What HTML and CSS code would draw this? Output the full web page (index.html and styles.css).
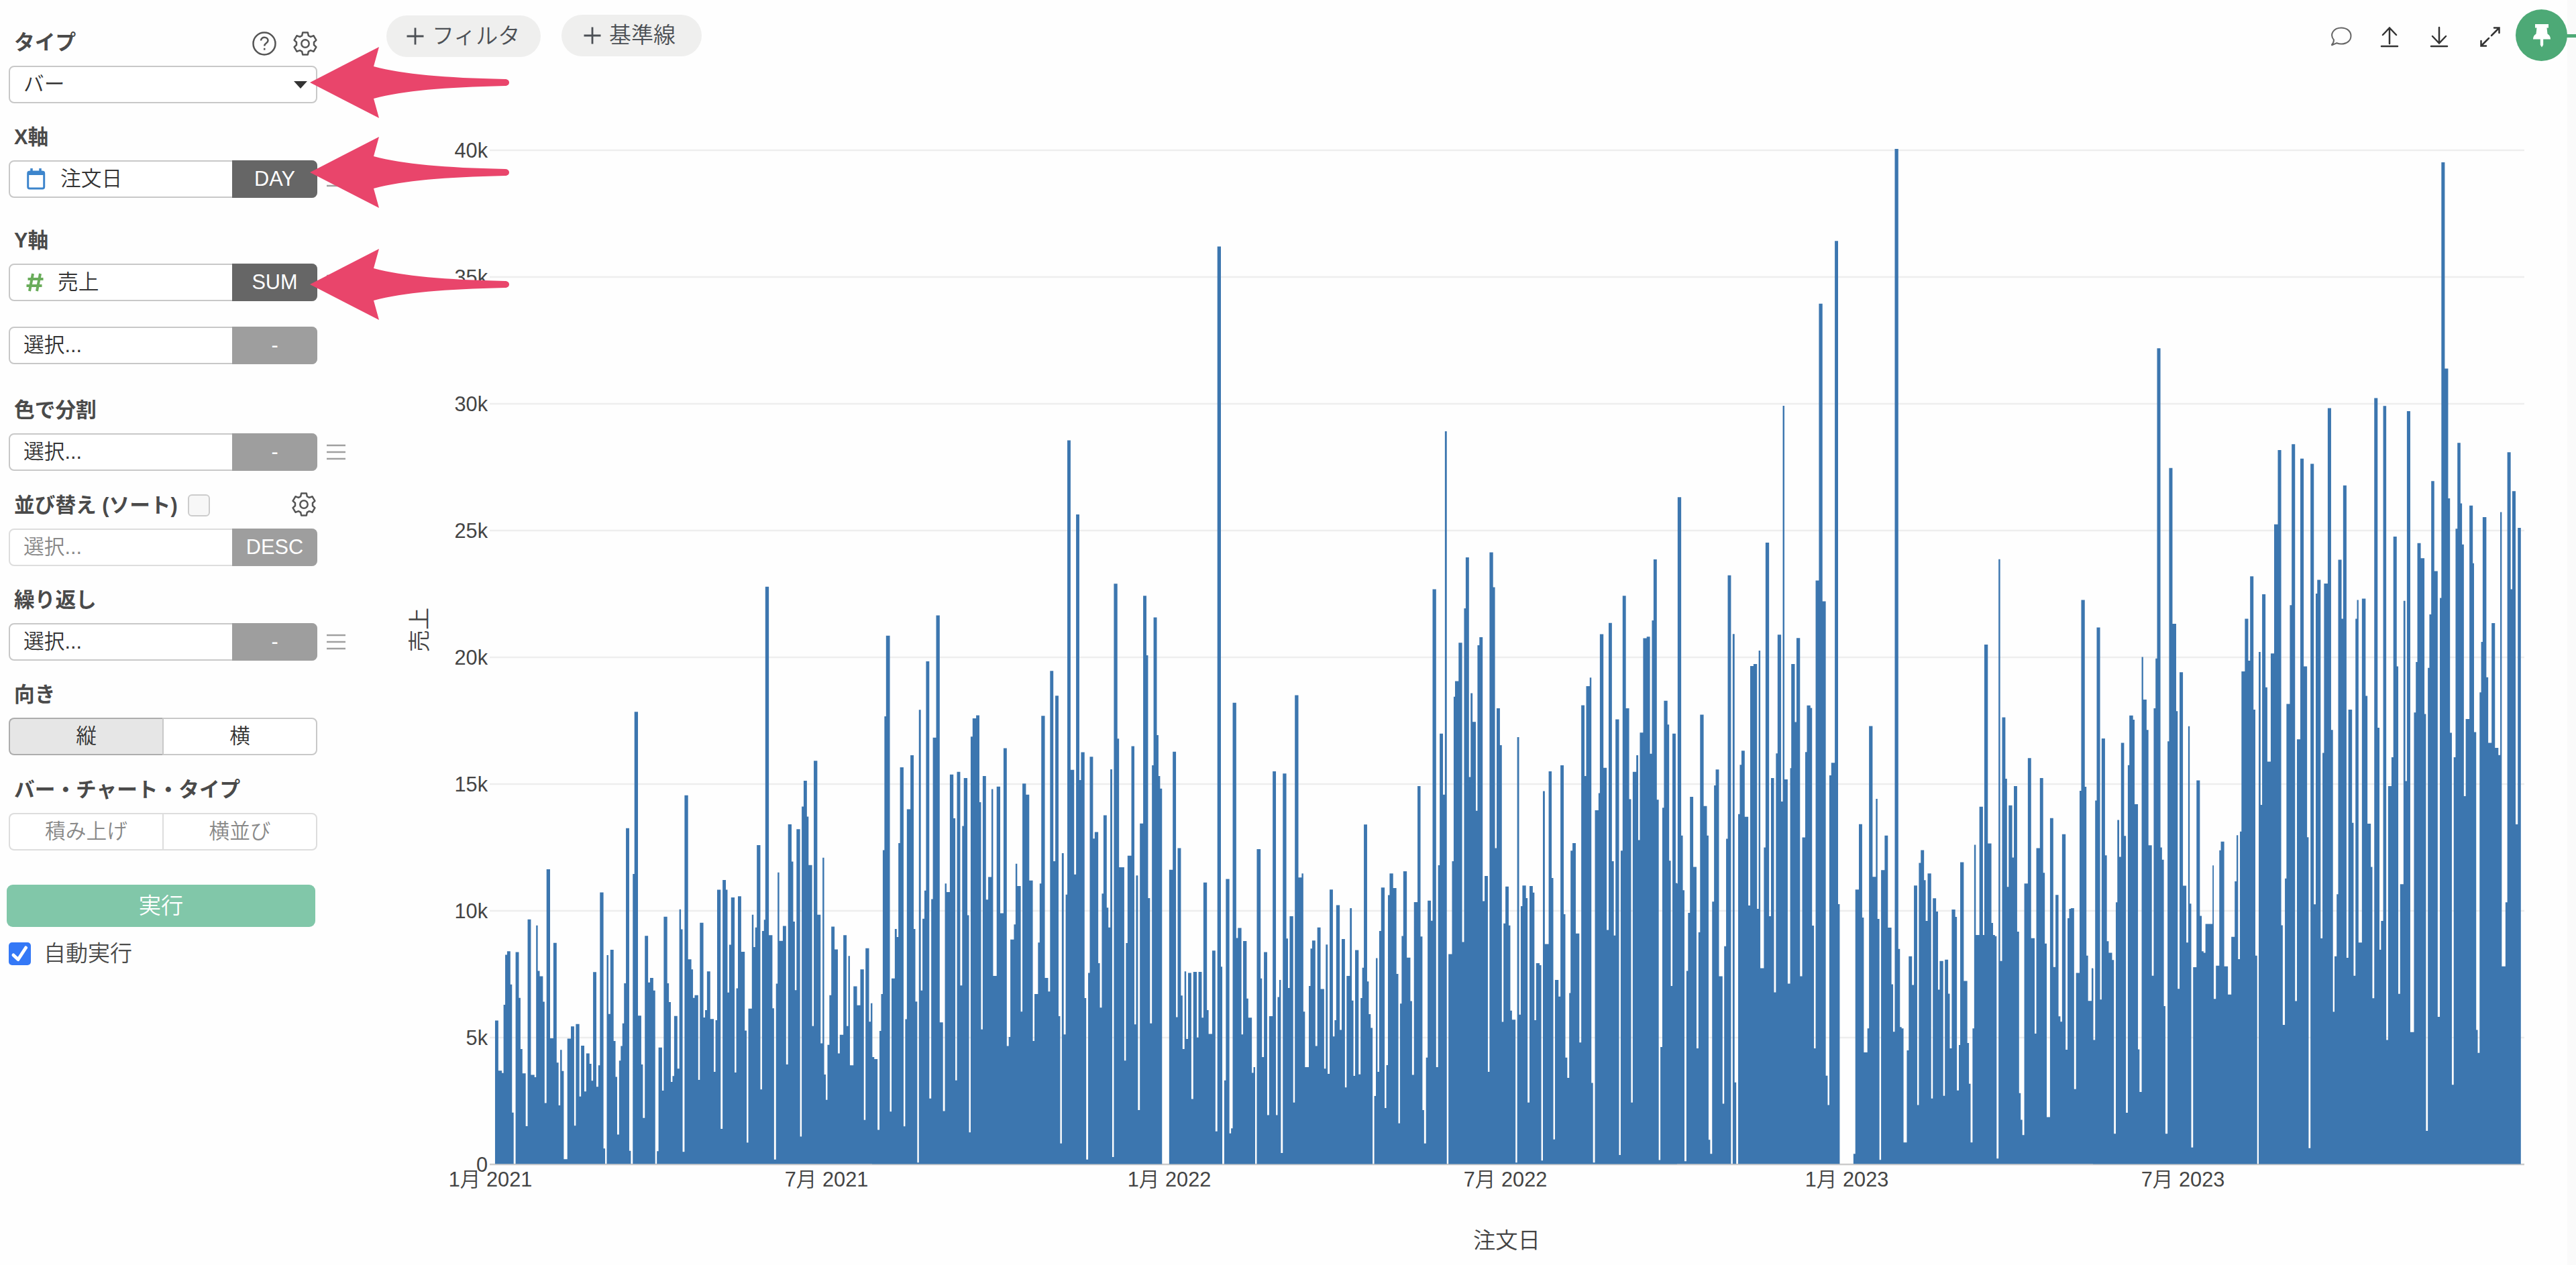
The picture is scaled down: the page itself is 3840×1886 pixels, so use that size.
FILE: index.html
```html
<!DOCTYPE html>
<html lang="ja">
<head>
<meta charset="utf-8">
<title>売上チャート</title>
<link rel="stylesheet" href="styles.css">
</head>
<body>
<svg class="defs" width="0" height="0">
  <symbol id="gear" viewBox="0 0 36 36"><path d="M14.2 1.5h7.6l1 4.6 3.2 1.8 4.6-1.6 3.8 6.6-3.4 3.1v4l3.4 3.1-3.8 6.6-4.6-1.6-3.2 1.8-1 4.6h-7.6l-1-4.6L10 28.100l-4.600 1.6-3.800-6.600L5 20v-4l-3.400-3.100 3.800-6.600L10 7.900l3.200-1.800z" stroke-linejoin="round"/><circle cx="18" cy="18" r="5.700"/></symbol>
  <symbol id="handle" viewBox="0 0 28 24"><path d="M0 2h28M0 12h28M0 22h28"/></symbol>
  <symbol id="arrow" viewBox="0 0 298 106"><path d="M0 53 103 0 95 29C140 41 200 46 291 48C299 48 299 58 291 58C200 60 140 65 95 77L103 106Z"/></symbol>
</svg>
<div class="app">
  <aside class="panel">
    <div class="head">タイプ
      <span class="tools">
        <svg class="line" width="36" height="36" viewBox="0 0 36 36"><circle cx="18" cy="18" r="16.500"/><path d="M13 13.500c0-6.500 10.500-6 10.500 0 0 4-5.300 3.500-5.300 8M18.200 24.800v2.700"/></svg>
        <svg class="line" width="36" height="36"><use href="#gear"/></svg>
      </span>
    </div>
    <div class="field"><span class="value">バー</span><i class="caret"></i></div>

    <div class="head g27">X軸</div>
    <div class="row">
      <div class="field"><svg class="cal" width="28" height="32" viewBox="0 0 28 32"><path d="M7 0v6M20 0v6" stroke-width="3.500"/><rect x="1.700" y="5" width="24" height="25" rx="2.500" stroke-width="3"/><path d="M1.700 7.500h24" stroke-width="5"/></svg><span class="value">注文日</span><b class="fn dark">DAY</b></div>
      <svg class="handle" width="28" height="24"><use href="#handle"/></svg>
    </div>

    <div class="head g40">Y軸</div>
    <div class="row">
      <div class="field"><svg class="hash" width="28" height="30" viewBox="0 0 28 30"><path d="M11 2 6 28M22 2l-5 26M3.500 10h23M1.500 20h23"/></svg><span class="value">売上</span><b class="fn dark">SUM</b></div>
      <svg class="handle" width="28" height="24"><use href="#handle"/></svg>
    </div>
    <div class="row g37"><div class="field"><span class="value">選択...</span><b class="fn">-</b></div></div>

    <div class="head g45">色で分割</div>
    <div class="row">
      <div class="field"><span class="value">選択...</span><b class="fn">-</b></div>
      <svg class="handle" width="28" height="24"><use href="#handle"/></svg>
    </div>

    <div class="head g27">並び替え (ソート)<span class="check"></span>
      <span class="tools sort"><svg class="line" width="36" height="36"><use href="#gear"/></svg></span>
    </div>
    <div class="row"><div class="field off"><span class="value">選択...</span><b class="fn">DESC</b></div></div>

    <div class="head g27">繰り返し</div>
    <div class="row">
      <div class="field"><span class="value">選択...</span><b class="fn">-</b></div>
      <svg class="handle" width="28" height="24"><use href="#handle"/></svg>
    </div>

    <div class="head g27">向き</div>
    <div class="seg"><span class="on">縦</span><span>横</span></div>

    <div class="head g27">バー・チャート・タイプ</div>
    <div class="seg off"><span>積み上げ</span><span>横並び</span></div>

    <div class="run">実行</div>
    <div class="auto"><svg width="33" height="34" viewBox="0 0 33 34"><rect width="33" height="34" rx="5"/><path d="M7 19l7 6.500L25.500 8"/></svg>自動実行</div>
  </aside>

  <main class="main">
    <div class="bar">
      <div class="pills">
        <div class="pill filter"><svg width="26" height="26" viewBox="0 0 26 26"><path d="M13 0.500v25M0.500 13h25"/></svg>フィルタ</div>
        <div class="pill guide"><svg width="26" height="26" viewBox="0 0 26 26"><path d="M13 0.500v25M0.500 13h25"/></svg>基準線</div>
      </div>
      <div class="actions">
        <svg width="32" height="32" viewBox="0 0 32 32" class="thin"><path d="M5 20.500C-2 12 5 2.500 16 2.500c8.500 0 14.500 5 14.500 12s-6 12-14.500 12c-3 0-5-.7-6.500-1.300L1.500 28.500C4 26 5 23.500 5 20.500z"/></svg>
        <svg width="28" height="32" viewBox="0 0 28 32"><path d="M14 26V3M4 13 14 2.500 24 13M2 30h24"/></svg>
        <svg width="28" height="32" viewBox="0 0 28 32"><path d="M14 2v23M4 15l10 10.500L24 15M2 30h24"/></svg>
        <svg width="32" height="32" viewBox="0 0 32 32"><path d="M18 14 29 3M22 2.500h7.500V10M14 18 3 29M2.500 22v7.500H10"/></svg>
      </div>
    </div>
    <svg class="chart" width="3287" height="1776" viewBox="540 110 3287 1776">
      <path class="grid" d="M730 224H3763M730 413H3763M730 602H3763M730 791H3763M730 980H3763M730 1169H3763M730 1358H3763M730 1547H3763"/>
      <path class="zero" d="M730 1736H3763"/>
      <g class="bars">
        <path transform="translate(700 900) scale(.408163 .573980)" d="M93 1455V1083H105V1213H118V1219H124V1042H130V912H137V903H149V989H155V1322H161V1455H168V905H180V1024H186V1157H193V1220H205V1357H212V820H224V1224H237V1230H243V836H249V954H256V968H268V1034H274V1297H281V690H294V1129H306V881H318V1192H325V1303H331V1159H337V1214H344V1443H357V1130H370V1098H382V1356H388V1092H401V1280H407V1148H419V1267H426V1168H438V1195H445V1239H451V957H463V1255H470V1199H476V750H489V1415H495V1455H501V913H507V1066H514V899H526V1136H533V1229H539V1379H546V1187H552V1149H558V1090H564V986H571V583H583V1421H589V1455H596V702H602V281H615V1070H627V1197H633V1336H640V863H652V984H659V972H671V1005H678V1455H684V1422H690V1153H703V1265H709V813H722V986H728V1035H735V1242H741V1227H747V1071H759V1208H766V794H772V846H778V1424H785V498H798V924H810V950H816V1024H822V1017H835V1237H841V829H854V1075H860V1056H867V955H879V1079H892V1216H898V1082H904V743H917V1364H924V718H936V743H942V1010H948V886H955V763H968V1218H974V999H980V760H992V904H1005V1109H1012V1400H1018V1052H1031V808H1037V892H1043V841H1049V627H1062V1262H1068V850H1075V821H1080V-44H1093V861H1106V1051H1112V1444H1119V987H1125V698H1131V876H1144V837H1156V1197H1163V573H1176V670H1182V826H1188V1004H1194V586H1207V1384H1213V527H1220V460H1232V553H1238V679H1251V1097H1257V408H1270V808H1282V1142H1289V660H1295V1223H1301V1289H1307V1146H1314V1017H1321V839H1333V898H1345V1168H1352V1120H1365V861H1377V1097H1383V915H1389V1199H1402V994H1415V1043H1427V950H1440V1341H1446V895H1459V1086H1465V1038H1470V1455Z"/>
        <path transform="translate(1300 600) scale(.408163 .752551)" d="M0 1509V1190H1V1297H8V1301H20V1441H27V1245H33V1172H39V887H45V622H51V462H65V1405H71V1141H83V1043H90V1059H96V873H102V723H115V1434H121V1222H127V806H140V699H152V1043H158V1187H165V1506H171V609H178V1165H184V1023H191V967H197V513H209V1379H216V984H222V664H234V422H247V1228H259V1404H266V953H272V970H284V737H297V824H304V1343H310V732H322V1155H329V839H335V744H348V1016H354V1446H360V662H367V626H380V620H392V792H398V1242H404V740H416V985H424V940H436V766H442V1136H455V761H468V1012H480V685H492V1275H499V1257H505V1064H518V1034H524V914H530V958H543V1207H549V755H562V777H574V947H587V1265H593V1172H606V1070H612V953H618V621H631V1140H643V1167H650V532H662V909H669V581H681V1216H687V1468H693V893H700V1252H707V975H713V75H725V728H738V935H745V222H757V748H763V693H776V1180H782V1500H789V1130H795V702H807V864H813V851H826V1111H832V1199H839V973H845V818H857V1001H863V1040H870V727H877V1495H883V359H896V666H902V921H921V1304H927V1071H933V898H947V681H958V1232H964V937H971V1402H978V834H990V383H1002V501H1008V982H1015V1230H1022V719H1028V426H1040V659H1046V740H1052V765H1059V1509H1085V926H1098V692H1110V1218H1116V883H1128V1175H1134V1281H1141V1127H1147V1261H1154V1130H1166V1380H1173V1128H1186V1258H1192V1128H1204V1219H1210V951H1223V1204H1229V1251H1242V1086H1254V1444H1261V-309H1274V1118H1279V1509H1286V1343H1292V944H1305V1448H1311V1438H1317V595H1330V1061H1336V1041H1349V1252H1355V1067H1368V1181H1374V1219H1387V1328H1393V1317H1399V1509H1405V885H1419V1141H1424V1297H1431V1089H1443V1412H1450V1216H1463V731H1470V1509Z"/>
        <path transform="translate(1900 600) scale(.408163 .752551)" d="M0 1509V731H5V1412H11V1178H17V1144H23V1487H30V735H43V1062H49V1160H55V1018H68V1387H74V580H87V941H99V933H105V1207H111V1317H125V1156H131V1082H137V1066H149V1275H156V1040H168V1162H181V1320H187V1074H194V1330H201V965H213V1256H219V1224H225V996H238V1243H245V1063H257V1357H263V1136H275V1002H282V1185H288V1334H294V1085H307V1331H314V1180H320V1120H326V836H338V1147H344V1212H351V1239H358V1509H364V1374H370V1101H376V1326H382V1047H389V961H402V1398H408V1313H414V976H420V933H433V962H445V1132H452V1428H458V1191H464V1057H470V929H483V1100H496V1186H502V1332H509V990H522V760H533V1058H540V1402H546V1468H553V1298H559V987H571V1027H577V370H590V1317H597V917H603V656H615V777H622V57H629V1509H635V1093H648V909H654V583H659V552H672V476H685V1069H692V408H698V307H710V742H716V576H723V633H735V809H741V481H748V465H760V988H767V938H779V1326H785V297H798V366H805V883H811V606H823V679H830V1227H836V1032H843V959H855V1036H861V1205H867V1223H880V1506H886V663H893V1213H899V998H905V957H918V982H924V1387H931V958H943V971H949V1224H955V1111H968V1115H974V1502H980V770H987V1073H1001V731H1012V942H1018V1460H1024V1144H1037V1177H1044V719H1056V1014H1062V1298H1069V1338H1076V1170H1081V888H1088V873H1100V1052H1113V1268H1120V600H1132V740H1138V562H1151V545H1157V1348H1163V1506H1170V808H1183V774H1188V459H1201V724H1213V1045H1220V437H1232V909H1239V1056H1245V628H1258V1491H1264V888H1271V383H1283V606H1295V786H1302V1387H1308V732H1321V699H1328V867H1334V654H1346V467H1359V464H1371V696H1378V432H1384V311H1396V787H1403V1501H1409V1277H1416V803H1422V591H1435V638H1441V908H1447V1156H1453V656H1465V952H1470V1509Z"/>
        <path transform="translate(2500 200) scale(.408163 .994898)" d="M0 1543V1123H2V544H15V1051H21V1133H27V1539H34V1254H40V1167H47V993H59V1098H71V1370H78V1196H84V870H97V1007H109V1051H115V1507H121V1528H128V1150H135V976H141V952H153V1262H166V1453H172V1217H179V1056H185V661H197V1543H203V749H210V1421H216V1543H223V1019H229V945H235V924H247V1023H260V1156H267V797H279V794H292V1161H298V774H304V1250H317V1069H323V612H336V1172H343V965H354V1286H361V928H367V750H380V1000H386V407H392V967H404V1273H413V950H417V794H430V881H436V755H449V1262H457V1054H468V926H474V856H487V860H493V1186H500V1370H506V669H518V254H531V700H543V1411H550V1455H556V961H563V942H576V160H588V1154H594V1543H644V1528H651V1132H664V1034H676V1174H682V1376H695V1340H701V887H714V1113H726V996H732V1176H739V1537H745V1103H758V1051H770V1189H783V1274H789V1345H795V22H808V1221H814V1338H820V1340H827V1511H839V1373H846V1232H858V1275H865V1126H877V1455H883V1092H890V1073H902V1118H908V1179H915V1108H928V1445H934V1145H946V1165H953V1282H959V1239H972V1441H978V1237H990V1288H996V1370H1003V1162H1016V1173H1022V1433H1029V1365H1034V1091H1047V1269H1060V1362H1066V1423H1072V1511H1079V1340H1085V1065H1091V1200H1104V1008H1117V1200H1122V765H1135V1063H1148V1182H1154V1200H1161V1202H1167V1535H1174V637H1180V1239H1187V874H1199V966H1205V1128H1211V1006H1224V1084H1230V977H1242V1195H1249V1437H1255V1477H1261V1500H1268V1123H1281V935H1293V1205H1306V1348H1312V1070H1325V965H1337V1107H1343V1213H1350V1473H1362V1025H1374V1248H1382V1140H1393V1322H1400V1330H1406V1049H1419V1372H1426V1175H1432V1161H1438V1160H1450V1431H1457V1257H1470V984H1476V698H1489V978H1495V1231H1501V1299H1514V1250H1519V1543Z"/>
        <path transform="translate(3120 200) scale(.459184 1.075255)" d="M0 1428V1157H1V1256H7V924H12V684H23V1200H28V838H39V1000H45V1119H51V1135H62V1145H68V1386H74V1065H79V951H85V1002H91V844H101V973H107V1357H113V875H118V806H130V812H135V929H146V1269H151V1328H158V725H163V784H174V826H180V986H191V1167H197V796H203V727H208V297H219V989H224V1006H230V1209H235V1386H242V842H247V463H258V679H270V800H275V1185H281V746H292V1042H303V1121H309V821H314V1067H319V1405H325V1155H336V896H347V1084H353V1133H359V1135H365V1095H388V1014H392V1199H399V1153H410V993H415V981H426V1154H438V1193H449V1113H460V1036H466V972H471V1144H477V967H482V745H493V672H504V730H510V613H521V798H527V1139H533V1428H538V718H544V930H549V638H560V767H566V870H577V720H588V541H600V438H611V1097H616V1235H623V1032H628V790H639V653H645V430H656V1202H662V839H673V450H684V738H695V975H700V1406H706V457H717V1068H723V637H728V618H739V1115H745V858H750V623H762V380H773V826H779V1217H784V1140H791V1054H796V590H807V672H812V487H823V1142H829V798H841V955H846V1167H852V672H857V646H862V1121H873V644H885V779H891V956H902V1016H907V1198H913V366H924V823H930V1131H935V1091H942V377H952V1256H958V904H969V864H975V558H986V738H991V1192H997V1040H1008V647H1014V897H1019V384H1030V1245H1042V802H1048V732H1053V567H1064V588H1076V804H1081V1382H1087V740H1092V666H1098V481H1108V606H1119V1224H1126V643H1131V39H1142V325H1153V505H1159V830H1165V1318H1171V864H1177V547H1183V428H1193V512H1198V569H1204V918H1210V811H1222V515H1233V595H1237V829H1244V1242H1249V1274H1255V774H1260V704H1265V531H1277V753H1283V844H1294V678H1305V851H1316V861H1322V524H1327V1154H1339V1065H1345V441H1356V631H1361V495H1372V957H1379V546H1389V1428Z"/>
      </g>
      <g class="ticks y">
        <text x="727" y="235">40k</text><text x="727" y="424">35k</text><text x="727" y="613">30k</text><text x="727" y="802">25k</text><text x="727" y="991">20k</text><text x="727" y="1180">15k</text><text x="727" y="1369">10k</text><text x="727" y="1558">5k</text><text x="727" y="1747">0</text>
      </g>
      <g class="ticks x">
        <text x="731" y="1769">1月 2021</text><text x="1232" y="1769">7月 2021</text><text x="1743" y="1769">1月 2022</text><text x="2244" y="1769">7月 2022</text><text x="2753" y="1769">1月 2023</text><text x="3254" y="1769">7月 2023</text>
      </g>
      <g class="titles">
        <text x="2246" y="1861">注文日</text>
        <text transform="translate(637 939) rotate(-90)">売上</text>
      </g>
    </svg>
  </main>
  <div class="edge"></div>
</div>
<div class="pin"><svg width="26" height="36" viewBox="0 0 26 36"><path d="M3 1h20v5.500h-2.500l1 9c3 1.500 4.500 4.500 4.500 8H15.200V32L13 35.500 10.800 32v-8.500H0c0-3.500 1.500-6.500 4.500-8l1-9H3z"/></svg></div>
<svg class="arrow a1" width="298" height="106"><use href="#arrow"/></svg>
<svg class="arrow a2" width="298" height="106"><use href="#arrow"/></svg>
<svg class="arrow a3" width="298" height="106"><use href="#arrow"/></svg>
</body>
</html>
```
FILE: styles.css
```css
* { box-sizing: border-box; }
body {
  margin: 0;
  position: relative;
  background: #fefefe;
  color: #333;
  font: 350 30.700px/46px "Liberation Sans", "Noto Sans CJK JP", sans-serif;
}
.defs { position: absolute; }
.app { display: flex; width: 3840px; height: 1886px; overflow: hidden; }
.app svg { flex: none; }

/* settings panel */
.panel { flex: none; width: 540px; padding: 41px 0 0 13px; }
.head {
  display: flex;
  align-items: center;
  width: 460px;
  height: 46px;
  margin-bottom: 11px;
  padding-left: 8px;
  color: #4a4a4a;
  font-weight: 700;
  white-space: nowrap;
}
.tools { display: flex; gap: 25px; margin: 2px 0 0 auto; }
.tools.sort { margin: -3px 2px 0 auto; }
.line { fill: none; stroke: #555; stroke-width: 2.500; }
.g27 { margin-top: 28.300px; }
.g37 { margin-top: 38px; }
.g40 { margin-top: 41.200px; }
.g45 { margin-top: 46px; }
.row { display: flex; align-items: center; gap: 14px; }
.field {
  position: relative;
  display: flex;
  align-items: center;
  width: 460px;
  height: 56px;
  padding-left: 20px;
  border: 2.500px solid #c8c8c8;
  border-radius: 8px;
  background: #fff;
}
.value { flex: 1; }
.caret {
  margin-right: 13px;
  border: 10px solid transparent;
  border-top: 11px solid #333;
  border-bottom: 0;
}
.fn {
  width: 127px;
  height: 56px;
  margin-right: -2px;
  border-radius: 0 8px 8px 0;
  background: #9e9e9e;
  color: #fff;
  font-weight: 400;
  line-height: 56px;
  text-align: center;
}
.fn.dark { background: #666; }
.field.off { border-color: #ddd; color: #888; }
.cal { margin: 0 22px 0 5px; fill: none; stroke: #3d85cc; }
.hash { margin: 0 20px 0 3px; fill: none; stroke: #6aad5b; stroke-width: 4; }
.handle { fill: none; stroke: #a0a0a0; stroke-width: 2.500; }
.check {
  width: 33px;
  height: 33px;
  margin-left: 15px;
  border: 2.500px solid #ccc;
  border-radius: 6px;
  background: #f7f7f7;
}
.seg { display: flex; width: 460px; height: 56px; line-height: 51px; text-align: center; }
.seg span { flex: 1; border: 2.500px solid #c8c8c8; background: #fff; }
.seg span:first-child { border-right: 0; border-radius: 8px 0 0 8px; }
.seg span:last-child { border-radius: 0 8px 8px 0; }
.seg .on { background: #e6e6e6; border-color: #adadad; }
.seg.off { color: #888; }
.seg.off span { border-color: #ddd; }
.run {
  width: 460px;
  height: 63px;
  margin: 51px 0 0 -3px;
  border-radius: 9px;
  background: #81c7a9;
  color: #fff;
  font-size: 33.300px;
  line-height: 63px;
  text-align: center;
}
.auto { display: flex; align-items: center; gap: 19px; margin-top: 17px; color: #4a4a4a; font-size: 33px; }
.auto rect { fill: #3478f6; }
.auto path { fill: none; stroke: #fff; stroke-width: 5; stroke-linecap: round; stroke-linejoin: round; }

/* toolbar above the chart */
.main { flex: none; width: 3287px; }
.bar { display: flex; justify-content: space-between; height: 110px; padding: 22px 99px 0 36px; }
.pills { display: flex; gap: 31px; }
.pill {
  display: flex;
  align-items: center;
  gap: 12px;
  height: 62px;
  border-radius: 31px;
  background: #efefee;
  color: #4c5055;
  font-size: 33px;
  white-space: nowrap;
}
.pill.filter { width: 230px; margin-top: 1px; padding-left: 30px; }
.pill.guide { width: 209px; padding-left: 33px; }
.pill svg { stroke: #4c5055; stroke-width: 2.800; }
.actions { display: flex; gap: 47px; height: 32px; margin-top: 17px; }
.actions svg { fill: none; stroke: #333; stroke-width: 2.500; stroke-linecap: round; }
.actions svg + svg { margin-left: -1px; }
.actions .thin { margin-right: -4px; stroke: #666; stroke-width: 2; }
.edge { flex: none; width: 13px; background: #fafafa; }

/* chart */
.chart { display: block; }
.grid { stroke: #eee; stroke-width: 2.600; }
.zero { stroke: #ccc; stroke-width: 2.600; }
.bars { fill: #3c76af; }
.ticks { fill: #444; font-size: 30.700px; }
.ticks.y { text-anchor: end; }
.ticks.x, .titles { text-anchor: middle; }
.titles { fill: #444; font-size: 33.300px; }

/* overlays */
.pin {
  position: absolute;
  left: 3750px;
  top: 14px;
  display: flex;
  align-items: center;
  justify-content: center;
  width: 77px;
  height: 77px;
  border-radius: 50%;
  background: #4da976;
}
.pin svg { fill: #fff; }
.pin::after {
  content: "";
  position: absolute;
  left: 76px;
  top: 37px;
  width: 14px;
  height: 5px;
  background: #4da976;
}
.arrow { position: absolute; left: 462px; fill: #e9456b; }
.a1 { top: 70px; }
.a2 { top: 204px; }
.a3 { top: 371px; }
```
